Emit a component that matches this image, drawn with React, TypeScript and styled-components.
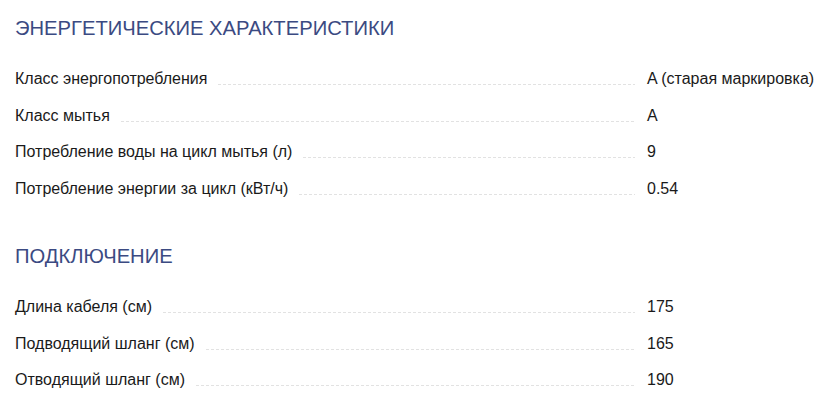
import React from "react";
import styled, { createGlobalStyle } from "styled-components";

const GlobalStyle = createGlobalStyle`
  html, body {
    margin: 0;
    padding: 0;
    background: #ffffff;
  }
  body {
    font-family: "Liberation Sans", Arial, Helvetica, sans-serif;
    color: #1a1a1a;
  }
`;

const Page = styled.div`
  padding: 16px 0 0 15px;
  width: 827px;
  box-sizing: border-box;
`;

const Section = styled.section<{ $first?: boolean }>`
  margin-top: ${(p) => (p.$first ? "0" : "37px")};
`;

const Heading = styled.h2`
  margin: 0 0 21px 0;
  font-size: 20.2px;
  line-height: 24px;
  font-weight: 400;
  color: #3b4a82;
  letter-spacing: 0;
`;

const Row = styled.div`
  display: flex;
  align-items: flex-start;
  height: 36.5px;
  font-size: 16px;
  line-height: 36.5px;
`;

const LabelCell = styled.div`
  width: 620px;
  display: flex;
  align-items: flex-start;
  flex-shrink: 0;
`;

const Label = styled.span`
  white-space: nowrap;
  color: #1a1a1a;
`;

const Leader = styled.span`
  flex: 1;
  height: 24px;
  margin-left: 11px;
  background-image: linear-gradient(to right, #e2e2e2 0 3px, transparent 3px 5px);
  background-size: 5px 1px;
  background-repeat: repeat-x;
  background-position: left bottom;
`;

const Value = styled.span`
  margin-left: 12px;
  white-space: nowrap;
  color: #1a1a1a;
`;

type Spec = { label: string; value: string };

const energy: Spec[] = [
  { label: "Класс энергопотребления", value: "A (старая маркировка)" },
  { label: "Класс мытья", value: "A" },
  { label: "Потребление воды на цикл мытья (л)", value: "9" },
  { label: "Потребление энергии за цикл (кВт/ч)", value: "0.54" },
];

const connection: Spec[] = [
  { label: "Длина кабеля (см)", value: "175" },
  { label: "Подводящий шланг (см)", value: "165" },
  { label: "Отводящий шланг (см)", value: "190" },
];

const SpecRow = ({ label, value }: Spec) => (
  <Row>
    <LabelCell>
      <Label>{label}</Label>
      <Leader />
    </LabelCell>
    <Value>{value}</Value>
  </Row>
);

export default function App() {
  return (
    <>
      <GlobalStyle />
      <Page>
        <Section $first>
          <Heading>ЭНЕРГЕТИЧЕСКИЕ ХАРАКТЕРИСТИКИ</Heading>
          {energy.map((s) => (
            <SpecRow key={s.label} {...s} />
          ))}
        </Section>
        <Section>
          <Heading>ПОДКЛЮЧЕНИЕ</Heading>
          {connection.map((s) => (
            <SpecRow key={s.label} {...s} />
          ))}
        </Section>
      </Page>
    </>
  );
}
